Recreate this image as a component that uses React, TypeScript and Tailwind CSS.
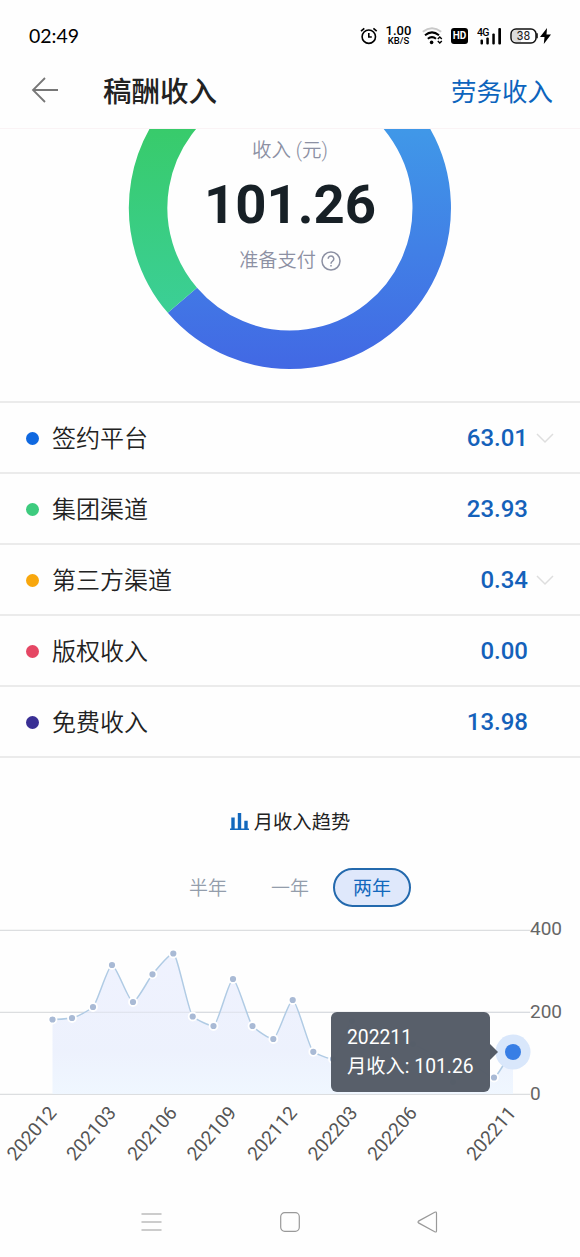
import { useState } from 'react';
import { clsx } from 'clsx';

interface IncomeRow {
  label: string;
  amount: string;
  dot: string;
  expandable?: boolean;
}

const INCOME_ROWS: IncomeRow[] = [
  { label: '签约平台', amount: '63.01', dot: 'bg-[#0f68e0]', expandable: true },
  { label: '集团渠道', amount: '23.93', dot: 'bg-[#3dcb7e]' },
  { label: '第三方渠道', amount: '0.34', dot: 'bg-[#f8a70d]', expandable: true },
  { label: '版权收入', amount: '0.00', dot: 'bg-[#e54764]' },
  { label: '免费收入', amount: '13.98', dot: 'bg-[#392f94]' },
];

const RANGES = ['半年', '一年', '两年'];

// [x, y] in chart pixels, one entry per month
const POINTS: [number, number][] = [
  [52.5, 99.5], [72, 98], [93, 87], [112, 45], [133, 82], [152.5, 54.3],
  [173.3, 33.5], [192.7, 96.5], [213.5, 106], [233, 59], [252.5, 106], [273.3, 119],
  [292.7, 80], [313.3, 131.8], [333, 139], [352, 101], [372, 127], [393, 116],
  [413, 124], [433, 135], [453, 162], [473, 146], [494, 157.5], [513, 132],
];

const MONTHS = [
  { label: '202012', x: 52.5 },
  { label: '202103', x: 112 },
  { label: '202106', x: 173 },
  { label: '202109', x: 232.5 },
  { label: '202112', x: 293 },
  { label: '202203', x: 353.5 },
  { label: '202206', x: 413 },
  { label: '202211', x: 512 },
];

// cubic path that flattens at local peaks and valleys
function smoothPath(pts: [number, number][]) {
  const slope = (i: number) => {
    if (i === 0 || i === pts.length - 1) return 0;
    const a = (pts[i][1] - pts[i - 1][1]) / (pts[i][0] - pts[i - 1][0]);
    const b = (pts[i + 1][1] - pts[i][1]) / (pts[i + 1][0] - pts[i][0]);
    return a * b <= 0 ? 0 : (2 * a * b) / (a + b);
  };
  let d = `M${pts[0][0]} ${pts[0][1]}`;
  for (let i = 1; i < pts.length; i++) {
    const [x0, y0] = pts[i - 1];
    const [x1, y1] = pts[i];
    const h = (x1 - x0) / 5;
    d += ` C${x0 + h} ${y0 + h * slope(i - 1)} ${x1 - h} ${y1 - h * slope(i)} ${x1} ${y1}`;
  }
  return d;
}

function StatusBar() {
  return (
    <div className="flex h-[70px] items-center pt-px pl-[29px] text-black">
      <span className="w-[331px] font-['Lato','Noto_Sans_CJK_SC',sans-serif] text-[19.5px] leading-none">02:49</span>
      {/* alarm */}
      <svg width="18" height="18" viewBox="0 0 18 18" fill="none" stroke="currentColor" strokeWidth="1.6">
        <circle cx="8.8" cy="9.7" r="6.7" />
        <path d="M8.8 6v4h3M1 4.2 4.3 1.3M13.4 1.3l3.3 2.9" />
      </svg>
      <div className="ml-[7px] flex w-[27px] flex-col items-center font-medium">
        <span className="text-[13px] leading-[11px]">1.00</span>
        <span className="text-[9.5px] leading-[10px] whitespace-nowrap">KB/S</span>
      </div>
      {/* wifi */}
      <svg className="ml-[10px]" width="21" height="18" viewBox="0 0 21 18" fill="none" stroke="currentColor" strokeWidth="2">
        <path d="M.8 4.8q9.2-7 18.4 0" stroke="#c9c9c9" />
        <path d="M3 8.2q7-5.7 14 0M5.8 11.8q4.2-3.4 8.2 0" />
        <circle cx="9.6" cy="15.4" r="1.8" fill="currentColor" stroke="none" />
        <path d="m15.8 12 2-2 2 2M15.8 14l2 2 2-2" strokeWidth="1.4" />
      </svg>
      <span className="ml-[8px] flex h-[16px] w-[17px] items-center justify-center rounded-[3px] bg-black text-[10px] font-bold text-white">
        HD
      </span>
      {/* signal */}
      <svg className="ml-[9px]" width="26" height="20" viewBox="0 0 26 20" fill="currentColor">
        <text x="0" y="9.5" fontSize="10.5" letterSpacing="-.6" fontWeight="500">4G</text>
        <rect x="3.5" y="13.5" width="2.5" height="5" rx="1" />
        <rect x="9.3" y="11.5" width="2.5" height="7" rx="1" />
        <rect x="15.3" y="7.5" width="2.5" height="11" rx="1" />
        <rect x="21.3" y="2" width="2.7" height="16.5" rx="1" />
      </svg>
      {/* battery */}
      <svg className="ml-[7px]" width="42" height="18" viewBox="0 0 42 18">
        <rect x="1" y="2" width="25" height="14" rx="5" fill="#fff" stroke="#111" strokeWidth="1.5" />
        <path d="M6 3h5v12H6q-4 0-4-4V7q0-4 4-4" fill="#dcdcdc" />
        <path d="M27 6.3v5" stroke="#111" strokeWidth="1.6" />
        <text x="13.5" y="13.2" fontSize="12" textAnchor="middle" fill="#222">38</text>
        <path d="m37 1-7 9h4.5L33.8 17 41 7.5h-4.5z" fill="#000" />
      </svg>
    </div>
  );
}

function Header() {
  return (
    <header className="flex h-[59px] items-center border-b border-[#faf3f5] pr-[27px] pb-[18px] pl-[31px]">
      <svg width="28" height="26" viewBox="0 0 28 26" fill="none" stroke="#777" strokeWidth="1.8">
        <path d="M27 13H2M14 1 2 13l12 12" />
      </svg>
      <h1 className="mt-[6px] ml-[44px] text-[28.5px] leading-10 font-medium text-[#222]">稿酬收入</h1>
      <span className="mt-[3px] ml-auto text-[25.5px] leading-10 text-[#0c64bd]">劳务收入</span>
    </header>
  );
}

function IncomeRing() {
  return (
    <section className="relative h-[272px] overflow-hidden">
      <svg className="block" width="580" height="272" viewBox="0 129 580 272" fill="none" strokeWidth="38.5">
        <defs>
          <linearGradient id="ringBlue" x1="0" y1="129" x2="0" y2="369" gradientUnits="userSpaceOnUse">
            <stop offset="0" stopColor="#4098e8" />
            <stop offset="1" stopColor="#4268e4" />
          </linearGradient>
          <linearGradient id="ringGreen" x1="0" y1="129" x2="0" y2="312" gradientUnits="userSpaceOnUse">
            <stop offset="0" stopColor="#38cb6b" />
            <stop offset="1" stopColor="#3bcf96" />
          </linearGradient>
        </defs>
        <path d="M290 66.25A141.75 141.75 0 1 1 182.4 300.3" stroke="url(#ringBlue)" />
        <path d="M182.4 300.3A141.75 141.75 0 0 1 220 84.5" stroke="url(#ringGreen)" />
      </svg>
      <div className="absolute inset-x-0 top-0 flex flex-col items-center text-[#8c90a3]">
        <span className="mt-[7px] text-[19.5px] leading-[30px] font-[350]">收入 (元)</span>
        <span className="mt-[6px] text-[54.5px] leading-[64px] font-bold text-[#172026]">101.26</span>
        <div className="mt-[10px] flex items-center gap-[5px]">
          <span className="text-[19.2px] leading-[30px] font-[350]">准备支付</span>
          <svg width="20" height="20" viewBox="0 0 20 20" fill="none" stroke="currentColor" strokeWidth="1.5">
            <circle cx="10" cy="10" r="9" />
            <path d="M7.2 7.8a2.8 2.8 0 1 1 4.5 2.2Q10 11.3 10 12.8M10 14v1.4" />
          </svg>
        </div>
      </div>
    </section>
  );
}

function IncomeList() {
  return (
    <ul className="border-t-2 border-[#ebebeb]">
      {INCOME_ROWS.map((row) => (
        <li key={row.label} className="flex h-[71px] items-center border-b-2 border-[#ebebeb] pt-px pr-[26px] pl-[26px]">
          <span className={clsx('size-[13px] rounded-full', row.dot)} />
          <span className="mt-px ml-[13px] text-[24px] leading-9 font-[350] text-[#222]">{row.label}</span>
          <span className="ml-auto text-[24px] font-medium text-[#1461ba]">{row.amount}</span>
          <div className="ml-[8px] w-[18px]">
            {row.expandable && (
              <svg width="18" height="11" viewBox="0 0 18 11" fill="none" stroke="#dedede" strokeWidth="1.5">
                <path d="m1 1 8 8 8-8" />
              </svg>
            )}
          </div>
        </li>
      ))}
    </ul>
  );
}

function TrendChart() {
  const line = smoothPath(POINTS);
  const [lastX, lastY] = POINTS[POINTS.length - 1];

  return (
    <div className="relative">
      <svg className="block overflow-visible" width="580" height="260" viewBox="0 0 580 260">
        <defs>
          <linearGradient id="area" x1="0" y1="30" x2="0" y2="174" gradientUnits="userSpaceOnUse">
            <stop offset="0" stopColor="#eef1fe" stopOpacity=".9" />
            <stop offset=".7" stopColor="#ebf0fd" stopOpacity=".9" />
            <stop offset="1" stopColor="#eef6ff" stopOpacity=".9" />
          </linearGradient>
        </defs>
        <path d="M0 10.3H530M0 92.3H530M0 174.3H530" stroke="#dcdee0" strokeWidth="1.2" />
        <path d={`${line} V174 H52.5 Z`} fill="url(#area)" />
        <path d="M52 92.3H530" stroke="#d5d9e2" strokeOpacity=".6" />
        <path d={line} fill="none" stroke="#b0cbe4" strokeWidth="1.5" />
        {POINTS.slice(0, -1).map(([x, y]) => (
          <circle key={x} cx={x} cy={y} r="4" fill="#a9bad5" stroke="#fff" strokeWidth="1.8" />
        ))}
        <circle cx={lastX} cy={lastY} r="17.5" fill="#d9e7fb" />
        <circle cx={lastX} cy={lastY} r="8" fill="#387ee5" />
        <g fontSize="19" fill="#666">
          <text x="530" y="15">400</text>
          <text x="530" y="97.5">200</text>
          <text x="530" y="179.5">0</text>
        </g>
        <g fontSize="19" fill="#555" textAnchor="end">
          {MONTHS.map((m) => (
            <text key={m.label} transform={`translate(${m.x + 5} 193.5) rotate(-49)`}>{m.label}</text>
          ))}
        </g>
      </svg>
      <div className="absolute top-[92px] left-[331px] h-[80px] w-[159px] rounded-[6px] bg-[#555c67]/98 px-4 pt-[11px] text-[19.3px] leading-[29px] whitespace-nowrap text-white">
        <div>202211</div>
        <div>月收入: 101.26</div>
        <svg className="absolute top-[32px] left-[159px]" width="8" height="16" viewBox="0 0 8 16" fill="#555c67">
          <path d="M0 0 8 8 0 16z" />
        </svg>
      </div>
    </div>
  );
}

function TrendSection() {
  const [range, setRange] = useState('两年');

  return (
    <section className="pt-[46px]">
      <div className="flex h-9 items-center justify-center gap-[5px]">
        <svg className="-mt-[2px]" width="19" height="19" viewBox="0 0 19 19" fill="#1268bd">
          <path d="M0 16.5h19V18H0zM1.3 5.5h3.4V17H1.3zM7.8 1h3.4v16H7.8zM14.3 8.8h3.4V17h-3.4z" />
        </svg>
        <h2 className="mt-[2px] text-[19.3px] text-[#222]">月收入趋势</h2>
      </div>
      <div className="mt-[28px] flex pl-[169px]">
        {RANGES.map((item, i) => (
          <button
            key={item}
            onClick={() => setRange(item)}
            className={clsx(
              'h-[39px] w-[78px] rounded-full pt-[2px] text-[19px] leading-none',
              i > 0 && 'ml-[4px]',
              range === item ? 'border-2 border-[#2369ad] bg-[#dfe8fb] text-[#1268bd]' : 'font-[350] text-[#939dab]'
            )}
          >
            {item}
          </button>
        ))}
      </div>
      <div className="mt-[13px]">
        <TrendChart />
      </div>
    </section>
  );
}

function NavigationBar() {
  return (
    <nav className="flex h-[77px] items-center justify-between pt-[6px] pr-[142px] pl-[141px]">
      <svg width="21" height="20" viewBox="0 0 21 20" stroke="#999" strokeWidth="1.2">
        <path d="M.5 2h20M.5 10h20M.5 18h20" />
      </svg>
      <svg width="20" height="20" viewBox="0 0 20 20" fill="none" stroke="#999" strokeWidth="1.2">
        <rect x=".7" y=".7" width="18.6" height="18.6" rx="4" />
      </svg>
      <svg width="21" height="22" viewBox="0 0 21 22" fill="none" stroke="#999" strokeWidth="1.2">
        <path d="M1.5 10.1Q.5 11 1.5 11.9L17.7 20.8Q19.5 21.5 19.5 19.7V2.3Q19.5.5 17.7 1.2Z" />
      </svg>
    </nav>
  );
}

export default function App() {
  return (
    <div className="h-[1257px] w-[580px] overflow-hidden bg-[#fefefe] font-['Roboto','Noto_Sans_CJK_SC',sans-serif]">
      <StatusBar />
      <Header />
      <IncomeRing />
      <IncomeList />
      <TrendSection />
      <NavigationBar />
    </div>
  );
}
